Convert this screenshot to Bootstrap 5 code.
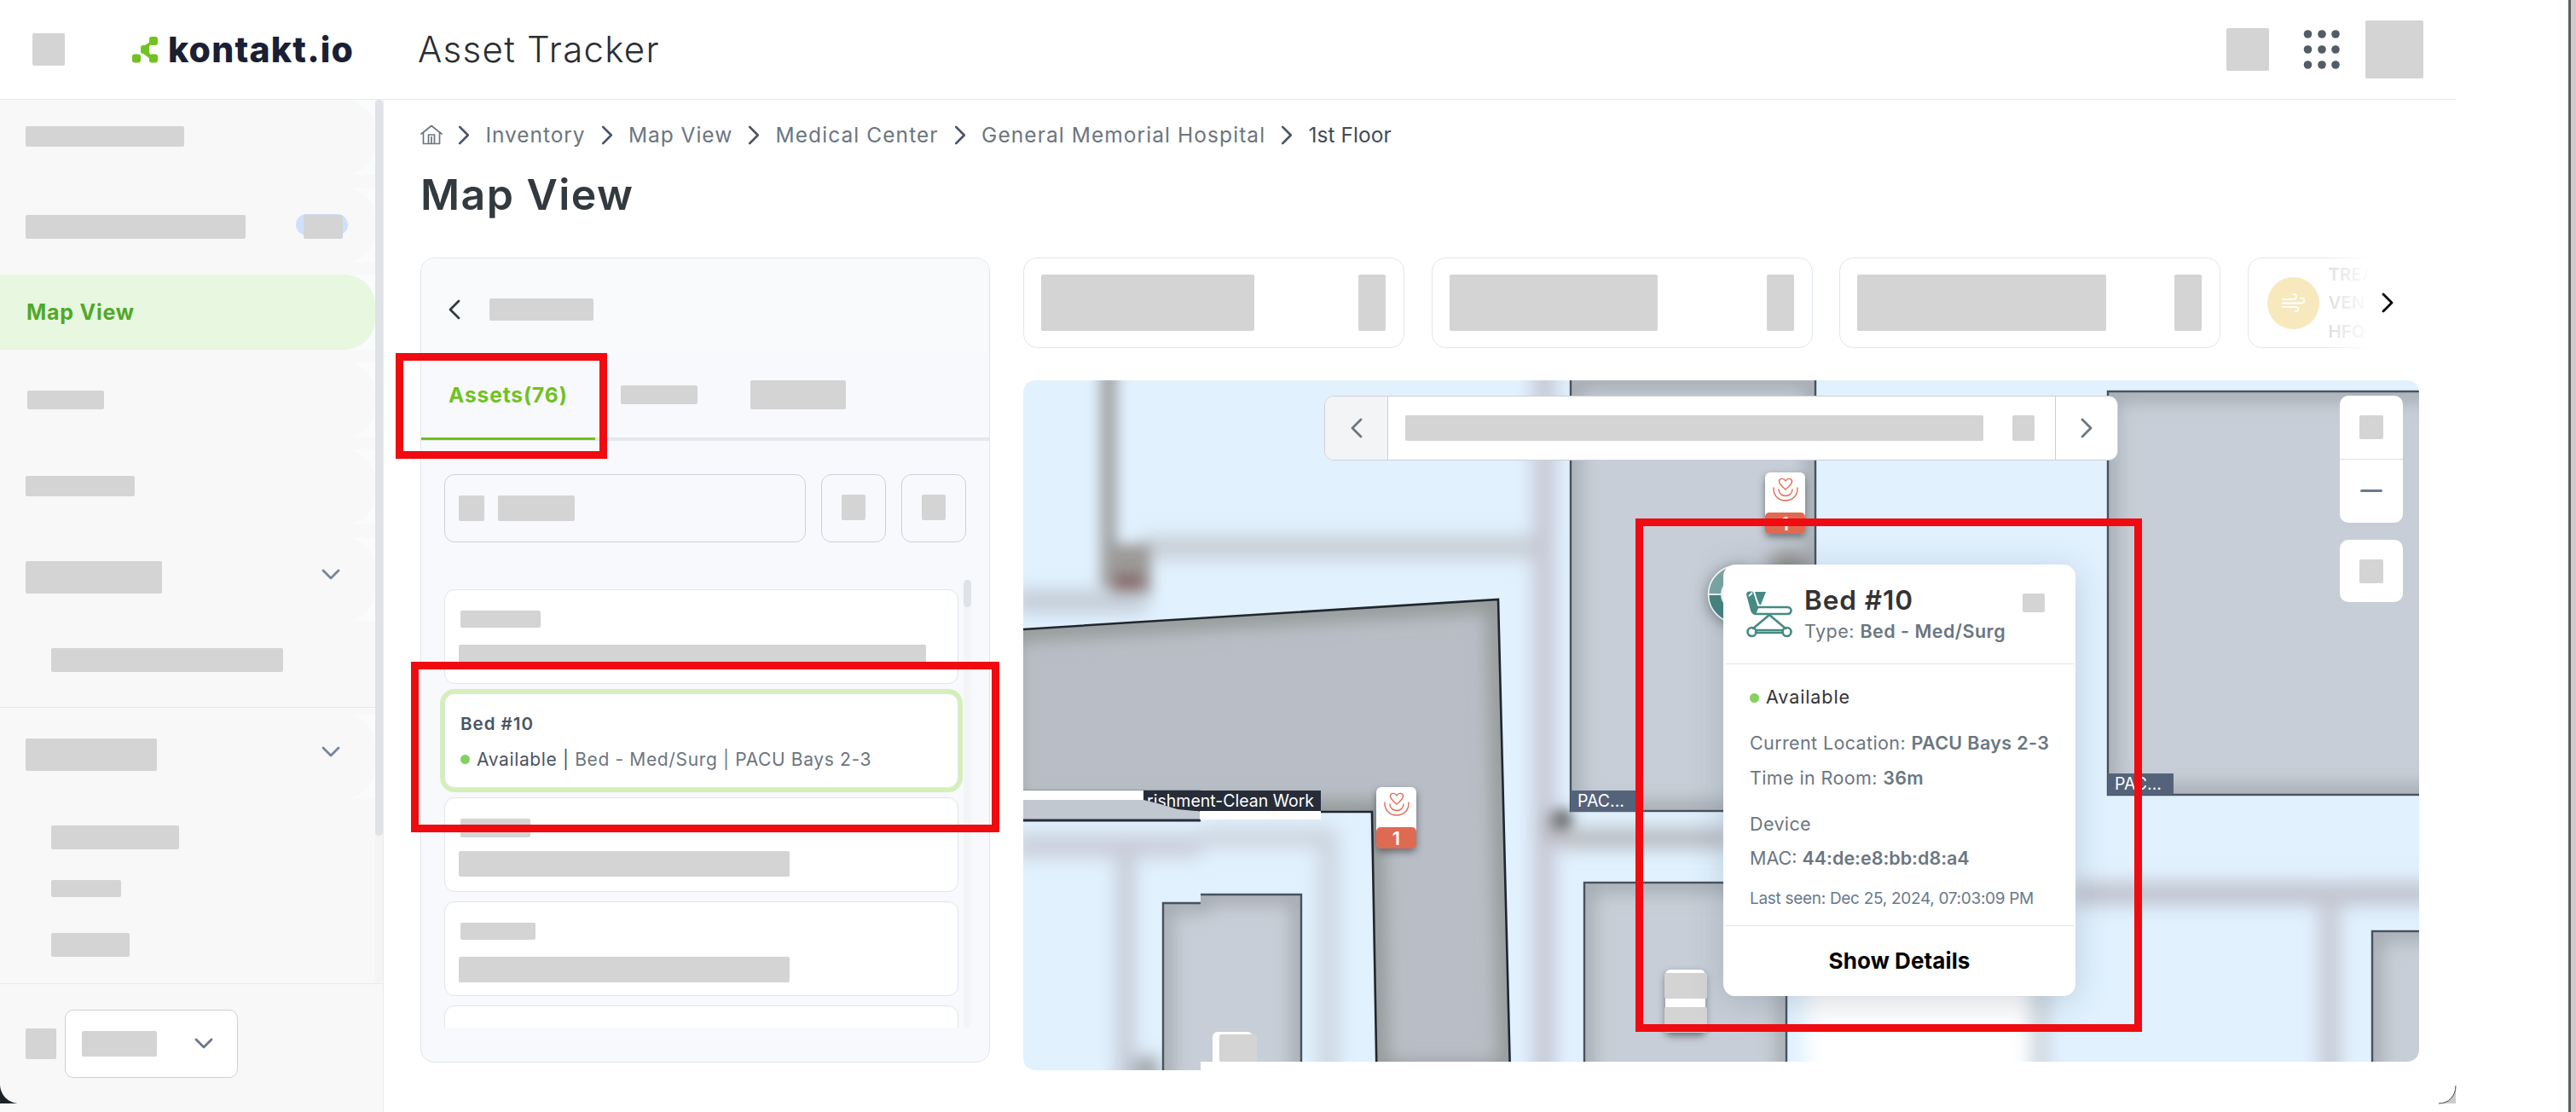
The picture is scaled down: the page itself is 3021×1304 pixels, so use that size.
<!DOCTYPE html>
<html lang="en">
<head>
    <meta charset="UTF-8">
    <meta name="viewport" content="width=device-width, initial-scale=1.0">
    <title>Asset Tracker - Map View</title>
    <link href="https://cdn.jsdelivr.net/npm/bootstrap@5.3.0/dist/css/bootstrap.min.css" rel="stylesheet">
    <style>
        body {
            height: 1304px;
            overflow: hidden;
            font-family: Inter, "Open Sans", sans-serif;
            background: #fff;
            color: #6b7680;
            line-height: 1;
            white-space: nowrap;
        }
        svg { display: block; flex: none; }
        .ph { background: #d4d4d4; border-radius: 2px; flex: none; }
        .desk-edge { width: 9px; background: #cdcbcb; border-left: 3px solid #5c6060; flex: none; }
        .app { width: 3012px; }

        /* top bar */
        .topbar { width: 2880px; height: 117px; border-bottom: 1px solid #e3ebf5; padding-left: 38px; padding-right: 38px; }
        .logo { margin-left: 79px; }
        .brand { font-size: 41px; font-weight: 800; letter-spacing: 1.2px; color: #1a1f33; margin-left: 12px; width: 293px; }
        .product { font-size: 42px; font-weight: 300; letter-spacing: 1.3px; color: #2a2d33; }
        .apps { margin: 0 28px 0 39px; }

        /* sidebar */
        .sidebar { width: 450px; height: 1187px; background: #f8f8f8; border-right: 1px solid #ebebed; flex: none; }
        .side-scroll { height: 1036px; }
        .side-list { width: 440px; }
        .side-bar { width: 9px; background: #f4f4f4; border-radius: 5px; }
        .side-thumb { height: 863px; background: #dfe2e7; border-radius: 5px; }
        .side-wrap { background: #fafbfd; margin-bottom: 14.5px; }
        .side-link { height: 88px; background: #f8f8f8; border-radius: 0 36px 36px 0; padding: 31px 38px 0 30px; }
        .side-link.current { background: #e7f7e0; color: #51a928; font-size: 25px; font-weight: 700; letter-spacing: .75px; padding: 0 0 0 31px; }
        .side-tall { height: 98px; padding-top: 28px; }
        .side-tall svg { margin: 9px 3px 0 0; }
        .side-sub { padding-left: 60px; }
        .sub-one { height: 102px; padding-top: 32px; border-bottom: 1px solid #e6e8ef; }
        .side-foot { border-top: 1px solid #e9e9eb; height: 151px; padding: 30px 0 0 30px; }
        .lang-mark { margin: 22px 10px 0 0; }
        .lang { width: 203px; height: 80px; border: 1px solid #ccd0da; border-radius: 10px; background: #fff; padding: 0 28px 0 19px; }
        .count-pill { width: 61px; height: 25px; border-radius: 13px; background: #cfe0fd; padding: 1px 0 0 9px; margin-right: -6px; }
        .push-1 { margin-top: 1px; }
        .push-2 { margin: 2px 0 0 2px; }

        /* content */
        .content { padding: 0 43px; }
        .crumbs { height: 82px; font-size: 24.5px; letter-spacing: .96px; gap: 18.2px; }
        .crumbs .ls-wide { letter-spacing: 1.07px; }
        .crumbs .here { color: #3f4b57; letter-spacing: .05px; }
        .page-title { font-size: 50px; font-weight: 600; letter-spacing: 1.45px; color: #333a3f; height: 59px; line-height: 59px; margin-bottom: 44px; }

        .side-panel { width: 668px; height: 944px; border: 1px solid #dde6ee; border-radius: 16px; background: #f8f9fd; overflow: hidden; flex: none; }
        .panel-head { height: 111px; background: #f9fafc; padding: 9px 0 0 32px; gap: 34px; }
        .panel-tabs { height: 103px; border-bottom: 4px solid #e4e7ec; }
        .panel-tabs .tab-on { width: 204px; height: 102px; border-bottom: 3px solid #70c21e; color: #70c21e; font-size: 24.5px; font-weight: 700; letter-spacing: .9px; padding: 0 0 1px 32px; }
        .tab-rest { padding: 0 0 2px 30px; gap: 62px; height: 100px; }
        .panel-search { padding: 39px 27px 0 27px; gap: 18px; }
        .outline { border: 1px solid #ccd0da; border-radius: 12px; height: 80px; }
        .search-box { padding-left: 16px; gap: 16px; }
        .square-btn { width: 76px; padding-bottom: 2px; }
        .list-row { margin-top: 44px; }
        .asset-list { height: 525px; overflow: hidden; padding-top: 11px; width: 622px; padding-left: 14px; margin-left: 13px; }
        .asset { height: 111px; border: 1px solid #dde6ee; border-radius: 12px; background: #fff; margin-bottom: 11px; padding: 24px 0 0 16px; flex: none; width: 603px; gap: 20px; display: flex; flex-direction: column; }
        .asset .ph:first-child { margin-left: 2px; }
        .asset.chosen { box-shadow: 0 0 0 5px #d5efb8; padding: 24px 0 0 18px; }
        .asset-name { font-size: 20.5px; font-weight: 600; letter-spacing: 1px; color: #4a5563; height: 22px; line-height: 22px; }
        .asset-meta { font-size: 21px; letter-spacing: .64px; }
        .dot { width: 11px; height: 11px; border-radius: 50%; background: #84d15e; flex: none; }
        .list-bar { width: 9px; height: 525px; border-radius: 5px; background: #f3f4f5; margin-left: 1px; }
        .list-thumb { height: 32px; border-radius: 5px; background: #dfe2e6; }

        .right-side { margin-left: 39px; }
        .stats { gap: 31.5px; }
        .stat { width: 447px; height: 106px; border: 1px solid #dfe7ef; border-radius: 16px; padding: 0 21px 0 20px; flex: none; background: #fff; }
        .stat-fade { border-right: 0; border-radius: 16px 0 0 16px; width: 158px; margin-right: -16px; padding: 0 0 0 22px; -webkit-mask-image: linear-gradient(90deg, #000 55%, transparent 92%); mask-image: linear-gradient(90deg, #000 55%, transparent 92%); }
        .stat-text { font-size: 20.5px; font-weight: 600; line-height: 33.5px; color: #d9dadc; margin-left: 11px; }
        .stats-next { margin-left: -16px; }

        /* map */
        .map { width: 1637px; height: 809px; margin-top: 38px; }
        .picker { left: 353px; top: 18px; width: 931px; height: 76px; border: 1px solid #ccd0d8; border-radius: 11px; background: #fff; overflow: hidden; }
        .picker-prev { width: 74px; background: #f3f4f6; border-right: 1px solid #ccd0d8; }
        .picker-mid { padding: 0 24px 0 20px; }
        .picker-next { width: 73px; border-left: 1px solid #ccd0d8; }
        .map-tools { left: 1544px; top: 18px; width: 74px; gap: 20px; }
        .tool { background: #fff; border-radius: 10px; }
        .tool-half { height: 74.5px; }
        .tool-single { height: 73px; }
        .room-tag { height: 25px; width: 77px; background: #55637a; color: #fff; font-size: 19.5px; padding: 0 0 0 8px; line-height: 24px; }
        .tag-a { left: 642px; top: 481px; }
        .tag-b { left: 1272px; top: 461px; }
        .tag-long { left: 141px; top: 481px; width: 208px; height: 24px; background: #272d38; overflow: hidden; padding: 0 8px 0 0; clip-path: polygon(0 0, 100% 0, 100% 100%, 61px 100%, 40px 22px, 20px 16px, 0 11px); }
        .pin { width: 47px; height: 72px; border-radius: 6px; background: #fff; box-shadow: 0 4px 8px rgba(40, 44, 50, .55); padding-top: 6px; }
        .pin-num { height: 25px; border-radius: 5px; background: #df6a52; color: #fff; font-size: 22px; font-weight: 600; }
        .pin-a { left: 414px; top: 477px; }
        .pin-b { left: 870px; top: 108px; }
        .pin-c { left: 753px; top: 691px; height: 74px; padding: 4px 0 0; gap: 10px; }
        .pin-d { left: 222px; top: 764px; height: 35px; padding: 3px 0 0 8px; border-radius: 6px 6px 0 0; box-shadow: none; }

        .asset-pop { left: 821px; top: 216px; width: 413px; height: 506px; border-radius: 14px; background: #fff; box-shadow: 0 6px 40px rgba(60, 80, 100, .22); font-size: 21.5px; }
        .pop-head { height: 117px; margin: 0 2px; border-bottom: 1px solid #dbe6ee; padding: 0 34px 0 25px; }
        .pop-icon { margin-top: 31px; }
        .pop-titles { margin: 22px 0 0 14px; }
        .pop-mark { margin-top: 34px; }
        .pop-name { font-size: 31.5px; font-weight: 600; letter-spacing: .95px; color: #333; height: 40px; line-height: 40px; }
        .pop-body { height: 307px; margin: 0 2px; border-bottom: 1px solid #dbe6ee; padding: 23px 0 0 29px; }
        .pop-row { height: 41px; line-height: 41px; letter-spacing: .38px; }
        .pop-row b, .pop-type b { font-weight: 600; }
        .pop-type { letter-spacing: .48px; height: 33px; line-height: 33px; }
        .pop-avail { color: #333; letter-spacing: .9px; height: 32px; gap: 8px; margin-bottom: 17px; }
        .pop-dev { margin-top: 13px; }
        .pop-mac { letter-spacing: 0; margin-top: -1px; }
        .pop-seen { font-size: 19px; letter-spacing: -.3px; color: #68798f; height: 53px; line-height: 53px; }
        .pop-link { height: 81px; color: #000; font-size: 26px; font-weight: 700; letter-spacing: .1px; }

        /* callout frames */
        .frame { border: 9px solid #ef0b10; position: absolute; }
        .frame-tab { left: 464px; top: 414px; width: 248px; height: 124px; }
        .frame-card { left: 482px; top: 776px; width: 690px; height: 200px; }
        .frame-pop { left: 1918px; top: 608px; width: 594px; height: 602px; }
        .corner-l { left: 0; top: 1271px; }
        .corner-r { left: 2857px; top: 1271px; }

        /* placeholder sizes */
        .w26 { width: 26px; } .w28 { width: 28px; } .w30 { width: 30px; } .w32 { width: 32px; } .w36 { width: 36px; }
        .w38 { width: 38px; } .w44 { width: 44px; } .w46 { width: 46px; } .w50 { width: 50px; } .w68 { width: 68px; }
        .w82 { width: 82px; } .w88 { width: 88px; } .w90 { width: 90px; } .w92 { width: 92px; } .w94 { width: 94px; }
        .w112 { width: 112px; } .w122 { width: 122px; } .w128 { width: 128px; } .w150 { width: 150px; } .w154 { width: 154px; }
        .w160 { width: 160px; } .w186 { width: 186px; } .w244 { width: 244px; } .w250 { width: 250px; } .w258 { width: 258px; }
        .w272 { width: 272px; } .w292 { width: 292px; } .w388 { width: 388px; } .w548 { width: 548px; } .w678 { width: 678px; }
        .h20 { height: 20px; } .h22 { height: 22px; } .h24 { height: 24px; } .h26 { height: 26px; } .h28 { height: 28px; }
        .h30 { height: 30px; } .h32 { height: 32px; } .h34 { height: 34px; } .h36 { height: 36px; } .h38 { height: 38px; }
        .h50 { height: 50px; } .h66 { height: 66px; } .h68 { height: 68px; }
        .gap-a { margin-top: 36px; } .gap-b { margin-top: 42px; }
    </style>
</head>
<body class="d-flex position-relative">

<!-- shared icons -->
<svg width="0" height="0" class="position-absolute">
    <symbol id="chev-r" viewBox="0 0 14 24"><path d="M2 2L12 12L2 22" fill="none" stroke="currentColor" stroke-width="2.8" stroke-linecap="round" stroke-linejoin="round"/></symbol>
    <symbol id="chev-l" viewBox="0 0 14 24"><path d="M12 2L2 12L12 22" fill="none" stroke="currentColor" stroke-width="2.8" stroke-linecap="round" stroke-linejoin="round"/></symbol>
    <symbol id="chev-d" viewBox="0 0 22 14"><path d="M2 2L11 11L20 2" fill="none" stroke="currentColor" stroke-width="2.8" stroke-linecap="round" stroke-linejoin="round"/></symbol>
    <symbol id="care" viewBox="0 0 30 28">
        <g fill="none" stroke="#df6a52" stroke-width="1.4" stroke-linecap="round">
            <path d="M15 14C10 10 7.500 7.500 7.500 4.600C7.500 1 12.500 0 15 3.800C17.500 0 22.500 1 22.500 4.600C22.500 7.500 20 10 15 14Z"/>
            <path d="M7 14C7 24 23 24 23 14"/>
            <path d="M1 12C0 32 30 32 29 12"/>
        </g>
    </symbol>
</svg>

<div class="app">
    <header class="topbar d-flex align-items-center">
        <div class="ph w38 h38"></div>
        <svg class="logo" width="30" height="31" viewBox="0 0 30 31" fill="#70c21e">
            <path d="M12 12L21 6V10L18 15L21 20V26L12 19Z"/>
            <rect x="20" y="0" width="10" height="10" rx="3"/>
            <rect x="10" y="10" width="10" height="10" rx="3"/>
            <rect x="20" y="20.500" width="10" height="10" rx="3"/>
            <rect x="0" y="20.500" width="10" height="10" rx="3"/>
        </svg>
        <div class="brand">kontakt.io</div>
        <div class="product">Asset Tracker</div>
        <div class="d-flex align-items-center ms-auto">
            <div class="ph w50 h50"></div>
            <svg class="apps" width="46" height="46" viewBox="0 0 46 46" fill="#525c69">
                <circle cx="6.500" cy="5" r="4.800"/><circle cx="23" cy="5" r="4.800"/><circle cx="39" cy="5" r="4.800"/>
                <circle cx="6.500" cy="23" r="4.800"/><circle cx="23" cy="23" r="4.800"/><circle cx="39" cy="23" r="4.800"/>
                <circle cx="6.500" cy="41" r="4.800"/><circle cx="23" cy="41" r="4.800"/><circle cx="39" cy="41" r="4.800"/>
            </svg>
            <div class="ph w68 h68"></div>
        </div>
    </header>

    <div class="d-flex">
        <nav class="sidebar">
            <div class="side-scroll d-flex">
                <div class="side-list">
                    <div class="side-wrap"><div class="side-link"><div class="ph w186 h24"></div></div></div>
                    <div class="side-wrap"><div class="side-link d-flex justify-content-between">
                        <div class="ph w258 h28 push-1"></div>
                        <div class="count-pill"><div class="ph w46 h28"></div></div>
                    </div></div>
                    <div class="side-wrap"><div class="side-link current d-flex align-items-center">Map View</div></div>
                    <div class="side-wrap"><div class="side-link d-flex"><div class="ph w90 h22 push-2"></div></div></div>
                    <div class="side-wrap"><div class="side-link"><div class="ph w128 h24"></div></div></div>
                    <div class="side-wrap mb-0"><div class="side-link side-tall d-flex justify-content-between">
                        <div class="ph w160 h38"></div>
                        <svg width="22" height="14" color="#77859b"><use href="#chev-d"/></svg>
                    </div></div>
                    <div class="side-sub sub-one"><div class="ph w272 h28"></div></div>
                    <div class="side-wrap mb-0 mt-2"><div class="side-link side-tall d-flex justify-content-between">
                        <div class="ph w154 h38"></div>
                        <svg width="22" height="14" color="#77859b"><use href="#chev-d"/></svg>
                    </div></div>
                    <div class="side-sub d-flex flex-column pt-4">
                        <div class="ph w150 h28 mt-2"></div>
                        <div class="ph w82 h20 gap-a"></div>
                        <div class="ph w92 h28 gap-b"></div>
                    </div>
                </div>
                <div class="side-bar"><div class="side-thumb"></div></div>
            </div>
            <div class="side-foot d-flex">
                <div class="ph w36 h36 lang-mark"></div>
                <div class="lang d-flex align-items-center justify-content-between">
                    <div class="ph w88 h30"></div>
                    <svg width="22" height="14" color="#69748a"><use href="#chev-d"/></svg>
                </div>
            </div>
        </nav>

        <main class="content">
            <div class="crumbs d-flex align-items-center">
                <svg width="26" height="24" viewBox="0 0 26 24" fill="none" stroke="#6b7680" stroke-width="1.700" stroke-linejoin="round" stroke-linecap="round">
                    <path d="M1 11L13 1.500L25 11M3.500 9.500V22.500H22.500V9.500M9.500 22.500V12H16.500V22.500M13 14.500V22.500"/>
                </svg>
                <svg width="14" height="23" color="#4a5563"><use href="#chev-r"/></svg>
                <span>Inventory</span>
                <svg width="14" height="23" color="#4a5563"><use href="#chev-r"/></svg>
                <span>Map View</span>
                <svg width="14" height="23" color="#4a5563"><use href="#chev-r"/></svg>
                <span class="ls-wide">Medical Center</span>
                <svg width="14" height="23" color="#4a5563"><use href="#chev-r"/></svg>
                <span class="ls-wide">General Memorial Hospital</span>
                <svg width="14" height="23" color="#4a5563"><use href="#chev-r"/></svg>
                <span class="here">1st Floor</span>
            </div>
            <h1 class="page-title">Map View</h1>

            <div class="d-flex">
                <section class="side-panel">
                    <div class="panel-head d-flex align-items-center">
                        <svg width="14" height="24" color="#333a3f"><use href="#chev-l"/></svg>
                        <div class="ph w122 h26"></div>
                    </div>
                    <div class="panel-tabs d-flex">
                        <div class="tab-on d-flex align-items-center">Assets(76)</div>
                        <div class="tab-rest d-flex align-items-center">
                            <div class="ph w90 h22"></div>
                            <div class="ph w112 h34"></div>
                        </div>
                    </div>
                    <div class="panel-search d-flex">
                        <div class="outline search-box flex-grow-1 d-flex align-items-center">
                            <div class="ph w30 h30"></div>
                            <div class="ph w90 h30"></div>
                        </div>
                        <div class="outline square-btn d-flex align-items-center justify-content-center"><div class="ph w28 h30"></div></div>
                        <div class="outline square-btn d-flex align-items-center justify-content-center"><div class="ph w28 h30"></div></div>
                    </div>
                    <div class="list-row d-flex">
                        <div class="asset-list d-flex flex-column">
                            <div class="asset"><div class="ph w94 h20"></div><div class="ph w548 h22"></div></div>
                            <div class="asset chosen">
                                <div class="asset-name">Bed #10</div>
                                <div class="asset-meta d-flex align-items-center"><span class="dot me-2"></span><span><span style="color:#4a5563">Available |</span> Bed - Med/Surg | PACU Bays 2-3</span></div>
                            </div>
                            <div class="asset gap-3"><div class="ph w82 h22"></div><div class="ph w388 h30"></div></div>
                            <div class="asset"><div class="ph w88 h20"></div><div class="ph w388 h30"></div></div>
                            <div class="asset"></div>
                        </div>
                        <div class="list-bar"><div class="list-thumb"></div></div>
                    </div>
                </section>

                <section class="right-side">
                    <div class="stats d-flex align-items-center">
                        <div class="stat d-flex align-items-center justify-content-between"><div class="ph w250 h66"></div><div class="ph w32 h66"></div></div>
                        <div class="stat d-flex align-items-center justify-content-between"><div class="ph w244 h66"></div><div class="ph w32 h66"></div></div>
                        <div class="stat d-flex align-items-center justify-content-between"><div class="ph w292 h66"></div><div class="ph w32 h66"></div></div>
                        <div class="stat stat-fade d-flex align-items-center">
                            <svg width="61" height="61" viewBox="0 0 61 61">
                                <circle cx="30.500" cy="30.500" r="30.500" fill="#f8e8bd"/>
                                <path d="M18 26H31C35 26 35 20 31 20M18 30.500H40C45 30.500 44 23 39 24.500M18 35H33C38 35 37 41 33 40" fill="none" stroke="#fff" stroke-width="1.800" stroke-linecap="round"/>
                            </svg>
                            <div class="stat-text">TREA<br>VENT<br>HFO</div>
                        </div>
                        <svg class="stats-next" width="14" height="24" color="#000"><use href="#chev-r"/></svg>
                    </div>

                    <div class="map position-relative">
                        <svg width="1637" height="809" viewBox="1200 446 1637 809">
                            <defs>
                                <clipPath id="area"><path d="M1216 446H2821Q2837 446 2837 462V1229Q2837 1245 2821 1245H1408V1255H1216Q1200 1255 1200 1239V462Q1200 446 1216 446Z"/></clipPath>
                                <clipPath id="hall"><path d="M1180 739.200L1757 703L1771 1260H1614.500L1609 952H1180Z"/></clipPath>
                                <clipPath id="rb"><rect x="1842" y="430" width="287" height="521"/></clipPath>
                                <clipPath id="rc"><rect x="2472" y="459" width="400" height="473"/></clipPath>
                                <clipPath id="rd"><rect x="1858" y="1035" width="237" height="240"/></clipPath>
                                <clipPath id="re"><path d="M1364 1059H1408V1049H1526V1270H1364Z"/></clipPath>
                                <clipPath id="rf"><rect x="2782" y="1092" width="90" height="180"/></clipPath>
                                <filter id="b" filterUnits="userSpaceOnUse" x="1100" y="350" width="1850" height="1000"><feGaussianBlur stdDeviation="11"/></filter>
                                <filter id="s" filterUnits="userSpaceOnUse" x="1100" y="350" width="1850" height="1000"><feGaussianBlur stdDeviation="8"/></filter>
                            </defs>
                            <g clip-path="url(#area)">
                                <rect x="1200" y="446" width="1637" height="809" fill="#e1f1fe"/>
                                <!-- blurred walls of the floor plan -->
                                <g filter="url(#b)">
                                    <path d="M1811 420V1280" stroke="#c5c4d2" stroke-width="24"/>
                                    <path d="M1340 642H1811" stroke="#c4cad2" stroke-width="24"/>
                                    <path d="M1190 705H1345" stroke="#bfc8d2" stroke-width="24"/>
                                    <path d="M1830 983H2030M1822 955V985" stroke="#b0b0b4" stroke-width="20"/>
                                    <path d="M2430 1048H2860" stroke="#bcbec9" stroke-width="24"/>
                                    <path d="M2732 1050V1280" stroke="#c6c8d2" stroke-width="24"/>
                                    <path d="M2118 1100H2380V1290H2118Z" fill="#fff"/>
                                    <path d="M2392 1120V1290" stroke="#c3c7cc" stroke-width="14"/>
                                    <path d="M1408 982H1558V1280" fill="none" stroke="#cbd3dd" stroke-width="22"/>
                                    <path d="M1190 992H1408" stroke="#c9cbd8" stroke-width="26"/>
                                    <path d="M1320 1005V1280" stroke="#c0c3cd" stroke-width="18"/>
                                    <circle cx="1345" cy="1254" r="14" fill="#888"/>
                                </g>
                                <g filter="url(#s)">
                                    <path d="M1300 420V690" stroke="#a3a5a6" stroke-width="20"/>
                                    <rect x="1302" y="638" width="48" height="58" fill="#9c9a98"/>
                                    <rect x="1306" y="672" width="34" height="20" fill="#8a6c70"/>
                                    <circle cx="1832" cy="961" r="12" fill="#666"/>
                                </g>

                                <!-- rooms, each with a soft inner edge -->
                                <path d="M1180 739.200L1757 703L1771 1260H1614.500L1609 952H1180Z" fill="#b9bec6"/>
                                <g clip-path="url(#hall)"><path d="M1180 739.200L1757 703L1771 1260H1614.500L1609 952H1180Z" fill="none" stroke="#8f9493" stroke-width="24" filter="url(#b)"/></g>
                                <path d="M1180 739.200L1757 703L1771 1260H1614.500L1609 952H1180Z" fill="none" stroke="#20262e" stroke-width="2.600"/>

                                <g fill="#c7ced7">
                                    <rect x="1842" y="430" width="287" height="521"/>
                                    <rect x="2472" y="459" width="400" height="473"/>
                                    <rect x="1858" y="1035" width="237" height="240"/>
                                    <path d="M1364 1059H1408V1049H1526V1270H1364Z"/>
                                    <rect x="2782" y="1092" width="90" height="180"/>
                                </g>
                                <g fill="none" stroke="#a0a6ac" stroke-width="20">
                                    <g clip-path="url(#rb)"><rect x="1842" y="446" width="287" height="505" filter="url(#b)"/></g>
                                    <g clip-path="url(#rc)"><rect x="2472" y="459" width="400" height="473" filter="url(#b)"/></g>
                                    <g clip-path="url(#rd)"><rect x="1858" y="1035" width="237" height="260" filter="url(#b)"/></g>
                                    <g clip-path="url(#re)"><path d="M1364 1300V1059H1408V1049H1526V1300" filter="url(#b)"/></g>
                                    <g clip-path="url(#rf)"><rect x="2782" y="1092" width="120" height="200" filter="url(#b)"/></g>
                                </g>
                                <g clip-path="url(#rb)"><circle cx="2098" cy="672" r="26" fill="#77726c" opacity=".75" filter="url(#b)"/></g>
                                <g fill="none" stroke="#46525f" stroke-width="2.400">
                                    <rect x="1842" y="430" width="287" height="521"/>
                                    <rect x="2472" y="459" width="400" height="473"/>
                                    <rect x="1858" y="1035" width="237" height="240"/>
                                    <path d="M1364 1270V1059H1408M1408 1049H1526V1270"/>
                                    <rect x="2782" y="1092" width="90" height="180"/>
                                </g>

                                <!-- lower left tile, drawn a little lower than its neighbour -->
                                <path d="M1200 937H1341Q1370 940 1408 952V961H1200Z" fill="#c1c8d0"/>
                                <rect x="1200" y="926" width="208" height="1.500" fill="#8f959d"/>
                                <rect x="1200" y="927" width="142" height="11" fill="#fff"/>
                                <rect x="1200" y="960.500" width="208" height="3" fill="#272d38"/>
                                <path d="M1407 951H1549V961H1407Z" fill="#fff"/>
                            </g>

                            <!-- selected asset cluster behind the popup -->
                            <circle cx="2037" cy="700" r="35" fill="#3b4046" opacity=".5" filter="url(#s)"/>
                            <path d="M2003 697A34 34 0 0 1 2071 697Z" fill="#7ca8a5"/>
                            <path d="M2003 697A34 34 0 0 0 2071 697Z" fill="#468581"/>
                            <circle cx="2037" cy="697" r="33.500" fill="none" stroke="#fff" stroke-width="1.600"/>
                            <path d="M2003 697H2021" stroke="#fff" stroke-width="1.800"/>
                            <circle cx="2037" cy="697" r="19" fill="#fff"/>
                        </svg>

                        <div class="room-tag tag-a position-absolute">PAC...</div>
                        <div class="room-tag tag-b position-absolute">PAC...</div>
                        <div class="room-tag tag-long position-absolute d-flex justify-content-end">rishment-Clean Work</div>

                        <div class="pin pin-a position-absolute d-flex flex-column align-items-center justify-content-between">
                            <svg width="30" height="28"><use href="#care"/></svg>
                            <div class="pin-num w-100 d-flex align-items-center justify-content-center">1</div>
                        </div>
                        <div class="pin pin-b position-absolute d-flex flex-column align-items-center justify-content-between">
                            <svg width="30" height="28"><use href="#care"/></svg>
                            <div class="pin-num w-100 d-flex align-items-center justify-content-center">1</div>
                        </div>
                        <div class="pin pin-c position-absolute d-flex flex-column align-items-center">
                            <div class="ph w50 h30"></div>
                            <div class="ph w50 h30"></div>
                        </div>
                        <div class="pin pin-d position-absolute"><div class="ph w44 h32"></div></div>

                        <div class="picker position-absolute d-flex">
                            <div class="picker-prev d-flex align-items-center justify-content-center"><svg width="14" height="24" color="#6b7680"><use href="#chev-l"/></svg></div>
                            <div class="picker-mid flex-grow-1 d-flex align-items-center justify-content-between"><div class="ph w678 h30"></div><div class="ph w26 h30"></div></div>
                            <div class="picker-next d-flex align-items-center justify-content-center"><svg width="14" height="24" color="#6b7680"><use href="#chev-r"/></svg></div>
                        </div>

                        <div class="map-tools position-absolute d-flex flex-column">
                            <div class="tool">
                                <div class="tool-half border-bottom d-flex align-items-center justify-content-center"><div class="ph w28 h28"></div></div>
                                <div class="tool-half d-flex align-items-center justify-content-center"><svg width="26" height="3"><rect width="26" height="3" rx="1.500" fill="#6b7a88"/></svg></div>
                            </div>
                            <div class="tool tool-single d-flex align-items-center justify-content-center"><div class="ph w28 h28"></div></div>
                        </div>

                        <div class="asset-pop position-absolute">
                            <div class="pop-head d-flex">
                                <svg class="pop-icon" width="54" height="56" viewBox="0 0 54 56">
                                    <g fill="none" stroke="#468a84" stroke-width="2.600" stroke-linejoin="round" stroke-linecap="round">
                                        <path d="M9 21L14 19H48C54 19 54 27 48 27H11"/>
                                        <path d="M27 28L8 44M27 28L46 44M11 46H43M11 49H43"/>
                                        <circle cx="6.500" cy="48" r="5"/><circle cx="47.500" cy="48" r="5"/>
                                    </g>
                                    <path d="M0 4C0 0 5 0 8 1L14 20L11 28C8 28 6 26 5 23Z" fill="#468a84"/>
                                    <path d="M10 1H23L17 16C15 18 13 10 10 1Z" fill="#468a84"/>
                                    <path d="M3 6L7 2" stroke="#fff" stroke-width="1.800"/>
                                </svg>
                                <div class="pop-titles">
                                    <div class="pop-name">Bed #10</div>
                                    <div class="pop-type">Type: <b>Bed - Med/Surg</b></div>
                                </div>
                                <div class="ph w26 h22 ms-auto pop-mark"></div>
                            </div>
                            <div class="pop-body">
                                <div class="pop-avail d-flex align-items-center"><span class="dot"></span>Available</div>
                                <div class="pop-row">Current Location: <b>PACU Bays 2-3</b></div>
                                <div class="pop-row">Time in Room: <b>36m</b></div>
                                <div class="pop-row pop-dev">Device</div>
                                <div class="pop-row pop-mac">MAC: <b>44:de:e8:bb:d8:a4</b></div>
                                <div class="pop-seen">Last seen: Dec 25, 2024, 07:03:09 PM</div>
                            </div>
                            <div class="pop-link d-flex align-items-center justify-content-center">Show Details</div>
                        </div>
                    </div>
                </section>
            </div>
        </main>
    </div>
</div>
<div class="desk-edge"></div>

<!-- rounded window corners -->
<svg class="corner-l position-absolute" width="24" height="24" viewBox="0 0 24 24"><path d="M0 0C0 13 10 23 23 23H0Z" fill="#1d2226"/></svg>
<svg class="corner-r position-absolute" width="24" height="24" viewBox="0 0 24 24"><path d="M23 2C23 14 15 23 3 23H23Z" fill="#cdcbcb"/><path d="M23 2C23 14 15 23 3 23" fill="none" stroke="#444" stroke-width="1"/></svg>

<div class="frame frame-tab"></div>
<div class="frame frame-card"></div>
<div class="frame frame-pop"></div>

<script src="https://cdn.jsdelivr.net/npm/bootstrap@5.3.0/dist/js/bootstrap.bundle.min.js"></script>
</body>
</html>
